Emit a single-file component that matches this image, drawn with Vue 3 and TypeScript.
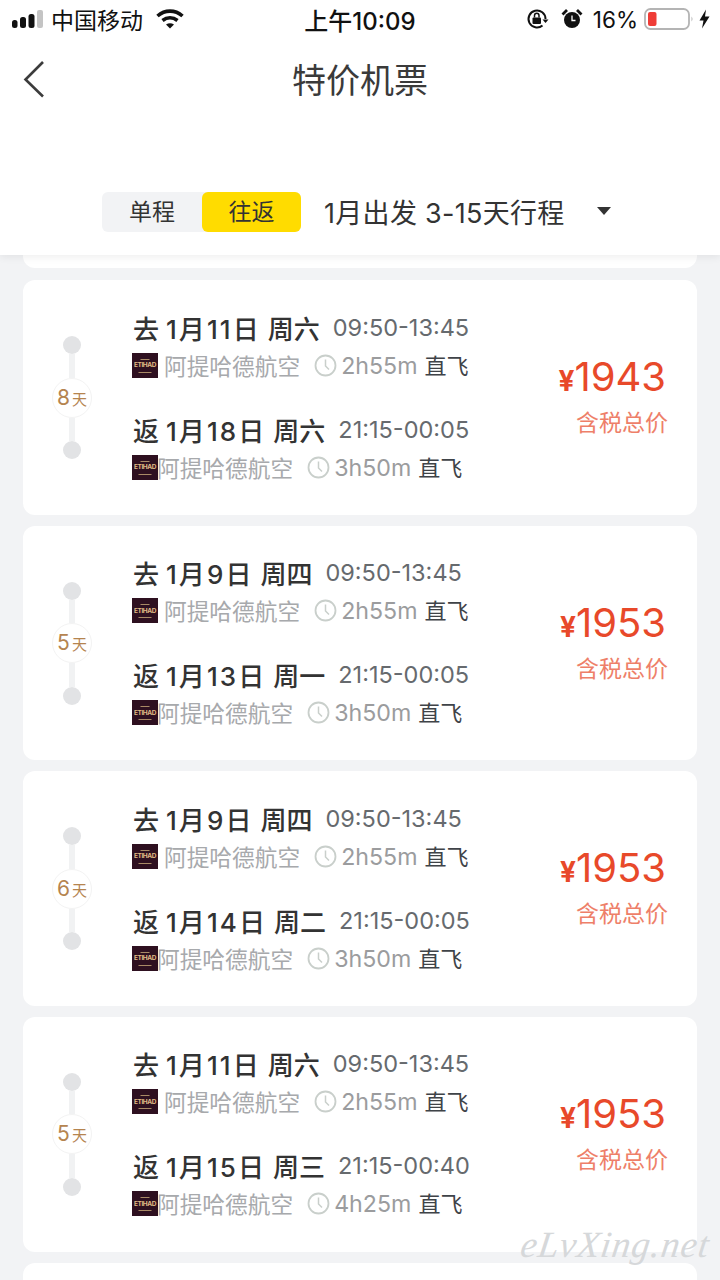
<script setup lang="ts">
interface Leg { label: string; date: string; week: string; time: string; dur: string }
interface Trip { days: string; price: string; out: Leg; back: Leg }
const leg = (label: string, date: string, week: string, time: string, dur: string): Leg => ({ label, date, week, time, dur })
const trips: Trip[] = [
  { days: '8', price: '1943', out: leg('去', '1月11日', '周六', '09:50-13:45', '2h55m'), back: leg('返', '1月18日', '周六', '21:15-00:05', '3h50m') },
  { days: '5', price: '1953', out: leg('去', '1月9日', '周四', '09:50-13:45', '2h55m'), back: leg('返', '1月13日', '周一', '21:15-00:05', '3h50m') },
  { days: '6', price: '1953', out: leg('去', '1月9日', '周四', '09:50-13:45', '2h55m'), back: leg('返', '1月14日', '周二', '21:15-00:05', '3h50m') },
  { days: '5', price: '1953', out: leg('去', '1月11日', '周六', '09:50-13:45', '2h55m'), back: leg('返', '1月15日', '周三', '21:15-00:40', '4h25m') }
]
</script>

<template>
  <div class="page">
    <header class="head">
      <div class="status">
        <div class="st-left">
          <svg width="31" height="18" viewBox="0 0 31 18" class="signal">
            <rect x="0" y="10" width="5.500" height="8" rx="2.500" fill="#111" />
            <rect x="8" y="7" width="6" height="11" rx="2.500" fill="#111" />
            <rect x="16.500" y="4" width="6" height="14" rx="2.500" fill="#111" />
            <rect x="25" y="0" width="6" height="18" rx="2" fill="#c4c4c4" />
          </svg>
          <span class="carrier">中国移动</span>
          <svg width="28" height="20" viewBox="0 0 28 20" class="wifi">
            <path d="M1.500 7C9 0.500 19 0.500 26.500 7" fill="none" stroke="#111" stroke-width="3.600" />
            <path d="M6.500 11.500C11 8 17 8 21.500 11.500" fill="none" stroke="#111" stroke-width="3.600" />
            <path d="M10 15.500Q14 12.800 18 15.500L14 19.500Z" fill="#111" />
          </svg>
        </div>
        <div class="clock-now">上午10:09</div>
        <div class="st-right">
          <svg width="24" height="24" viewBox="0 0 24 24" class="lock">
            <path d="M20.500 12A8.500 8.500 0 1 0 17.500 18.500" fill="none" stroke="#111" stroke-width="2" />
            <path d="M17.500 12.500H23.500L20.500 16Z" fill="#111" />
            <rect x="7.500" y="10.500" width="8.500" height="6.500" rx="1" fill="#111" />
            <path d="M9.500 10.500V8.500a2.200 2.200 0 0 1 4.500 0V10.500" fill="none" stroke="#111" stroke-width="1.500" />
          </svg>
          <svg width="22" height="22" viewBox="0 0 22 22" class="alarm">
            <circle cx="11" cy="12" r="8" fill="#111" />
            <path d="M1.500 6.500L6 2M20.500 6.500L16 2" stroke="#111" stroke-width="2.800" />
            <path d="M11 7.500V12.500H14.500" fill="none" stroke="#fff" stroke-width="1.300" />
          </svg>
          <span class="pct">16%</span>
          <svg width="50" height="22" viewBox="0 0 50 22" class="batt">
            <rect x="1" y="1" width="44" height="20" rx="5.500" fill="none" stroke="#b4b4b4" stroke-width="1.800" />
            <rect x="4" y="4" width="8.500" height="14" rx="2" fill="#ef3d37" />
            <path d="M47.500 8.500Q49.500 11 47.500 13.500Z" fill="#b4b4b4" />
          </svg>
          <svg width="11" height="20" viewBox="0 0 11 20" class="bolt">
            <path d="M7 0.500L0.500 11.500H4.500L3 19.500L10.500 7.500H6Z" fill="#111" />
          </svg>
        </div>
      </div>
      <div class="nav">
        <svg class="back" width="24" height="38" viewBox="0 0 24 38">
          <path d="M21 2L3.500 19.500L21 36.500" fill="none" stroke="#3c3c3c" stroke-width="2.600" />
        </svg>
        <h1 class="title">特价机票</h1>
      </div>
      <div class="filter">
        <div class="seg">
          <span class="seg-a">单程</span>
          <span class="seg-b">往返</span>
        </div>
        <span class="range">1月出发 3-15天行程</span>
        <i class="caret"></i>
      </div>
    </header>

    <main class="list">
      <div class="stub stub-top"></div>
      <article v-for="(t, i) in trips" :key="i" class="card">
        <div class="rail">
          <i class="dot"></i>
          <i class="bar"></i>
          <div class="badge"><b>{{ t.days }}</b><small>天</small></div>
          <i class="bar"></i>
          <i class="dot"></i>
        </div>
        <div class="legs">
          <section v-for="(l, k) in [t.out, t.back]" :key="k" class="leg" :class="k === 0 ? 'leg-out' : 'leg-back'">
            <div class="line-top">
              <span class="when">{{ l.label }} <span class="date">{{ l.date }}</span> {{ l.week }}</span>
              <span class="time">{{ l.time }}</span>
            </div>
            <div class="line-sub">
              <span class="logo"><em>ETIHAD</em></span>
              <span class="air">阿提哈德航空</span>
              <svg class="ck" width="23" height="23" viewBox="0 0 23 23">
                <circle cx="11.500" cy="11.500" r="10" fill="none" stroke="#c9cfcb" stroke-width="1.800" />
                <path d="M11.500 5.500V12L15 15.500" fill="none" stroke="#c9cfcb" stroke-width="1.500" />
              </svg>
              <span class="dur">{{ l.dur }}</span>
              <span class="direct">直飞</span>
            </div>
          </section>
        </div>
        <div class="price">
          <div class="amount"><span class="yen">¥</span>{{ t.price }}</div>
          <div class="tax">含税总价</div>
        </div>
      </article>
      <div class="stub stub-bottom"></div>
    </main>

    <div class="mark">eLvXing.net</div>
  </div>
</template>

<style>
html, body { margin: 0; background: #f2f3f5; }
</style>

<style scoped>
.page {
  position: relative;
  width: 720px;
  height: 1280px;
  overflow: hidden;
  background: #f2f3f5;
  font-family: Inter, "Noto Sans CJK SC", sans-serif;
  color: #333;
}
.head {
  position: relative;
  z-index: 2;
  height: 255px;
  background: #fff;
  box-shadow: 0 2px 8px rgba(0, 0, 0, 0.07);
}
.status {
  height: 40px;
  display: grid;
  grid-template-columns: 1fr auto 1fr;
  align-items: center;
  color: #111;
  font-size: 23px;
}
.st-left { display: flex; align-items: center; padding-left: 12px; }
.signal { margin: -2px 8px 0 0; }
.carrier { margin-top: -2px; }
.wifi { margin: -3px 0 0 13px; }
.clock-now { font-weight: 500; font-size: 24px; margin-top: -2px; }
.st-right { display: flex; align-items: center; justify-content: flex-end; padding-right: 10px; }
.lock { margin: -2px 0 0 -3px; }
.alarm, .bolt { margin-top: -2px; }
.alarm { margin-left: 12px; }
.pct { margin: -2px 0 0 10px; font-size: 22.500px; }
.batt { margin: -2px 0 0 6px; }
.bolt { margin-left: 5px; }
.nav {
  position: relative;
  height: 76px;
  display: flex;
  align-items: center;
  justify-content: center;
}
.back { position: absolute; left: 22px; top: 20px; }
.title { margin: 0; font-size: 34px; font-weight: 400; color: #3a3a3a; }
.filter {
  display: flex;
  align-items: center;
  margin-top: 76px;
  padding-left: 102px;
  height: 40px;
}
.seg {
  display: flex;
  width: 199px;
  height: 40px;
  border-radius: 6px;
  background: #f2f3f5;
  font-size: 23px;
  line-height: 40px;
  text-align: center;
  color: #333;
}
.seg-a { width: 100px; }
.seg-b { width: 99px; background: #ffdc00; border-radius: 6px; }
.range { margin: -2px 0 0 23px; font-size: 27px; letter-spacing: 0.3px; color: #333; }
.caret {
  margin-left: 32px;
  margin-top: -2px;
  border-style: solid;
  border-width: 8px 7.500px 0;
  border-color: #333 transparent transparent;
}
.list {
  display: flex;
  flex-direction: column;
  gap: 11px;
  padding: 0 23px;
}
.stub { background: #fff; flex: none; }
.stub-top { height: 13px; border-radius: 0 0 12px 12px; margin-bottom: 1px; }
.stub-bottom { height: 20px; border-radius: 12px 12px 0 0; }
.card {
  flex: none;
  height: 234.670px;
  background: #fff;
  border-radius: 12px;
  display: flex;
  box-sizing: border-box;
}
.rail {
  width: 98px;
  flex: none;
  display: flex;
  flex-direction: column;
  align-items: center;
  padding-top: 56px;
  box-sizing: border-box;
}
.dot { width: 18px; height: 18px; border-radius: 50%; background: #e2e3e5; flex: none; }
.bar { width: 6px; height: 23.500px; background: #f1f2f3; flex: none; }
.badge {
  width: 40px;
  height: 40px;
  flex: none;
  box-sizing: border-box;
  border-radius: 50%;
  border: 1px solid #f3f3f3;
  display: flex;
  align-items: baseline;
  justify-content: center;
  line-height: 38px;
  color: #b5844f;
}
.badge b { font-weight: 400; font-size: 21px; }
.badge small { font-size: 15px; margin-left: 2px; }
.legs { width: 345px; flex: none; margin-left: 12px; padding-top: 31px; }
.leg-back { margin-top: 34px; }
.line-top { display: flex; align-items: center; height: 32px; }
.when { font-size: 26px; font-weight: 500; color: #333; white-space: pre; }
.date { letter-spacing: 2.100px; }
.time { margin-left: 13px; font-size: 23.500px; color: #666a6e; }
.line-sub { display: flex; align-items: center; height: 28px; margin-top: 8px; }
.logo {
  position: relative;
  width: 26px;
  height: 25px;
  margin-left: -1px;
  flex: none;
  background: #2e1020;
  display: flex;
  align-items: center;
  justify-content: center;
  overflow: hidden;
}
.logo::before, .logo::after {
  content: "";
  position: absolute;
  left: 50%;
  background: #a98a66;
  height: 1px;
  transform: translateX(-50%);
}
.logo::before { top: 6px; width: 9px; }
.logo::after { bottom: 5px; width: 13px; }
.logo em { font-style: normal; font-size: 6.500px; font-weight: 700; color: #e0bb86; letter-spacing: -0.4px; white-space: nowrap; }
.air { font-size: 22.700px; color: #a7a9ac; white-space: nowrap; }
.leg-out .air { margin-left: 6px; }
.leg-back .air { margin-left: -1px; }
.ck { margin-left: 14px; flex: none; }
.dur { margin: 1px 0 0 4px; font-size: 23.200px; color: #9b9c9e; }
.direct { margin: -3px 0 0 7px; font-size: 22px; color: #3f4348; }
.price {
  flex: 1;
  padding-right: 31px;
  text-align: right;
  padding-top: 70px;
}
.amount { font-size: 40px; line-height: 54px; color: #e8492a; }
.yen { font-size: 28px; font-weight: 700; }
.tax { font-size: 23px; line-height: 30px; margin-right: -2px; color: #ee7f69; }
.mark {
  position: absolute;
  z-index: 3;
  right: 10px;
  bottom: 14px;
  font-family: "Liberation Serif", serif;
  font-style: italic;
  font-size: 37px;
  letter-spacing: 1px;
  color: #d6d8da;
  transform: skewX(-8deg);
}
</style>
